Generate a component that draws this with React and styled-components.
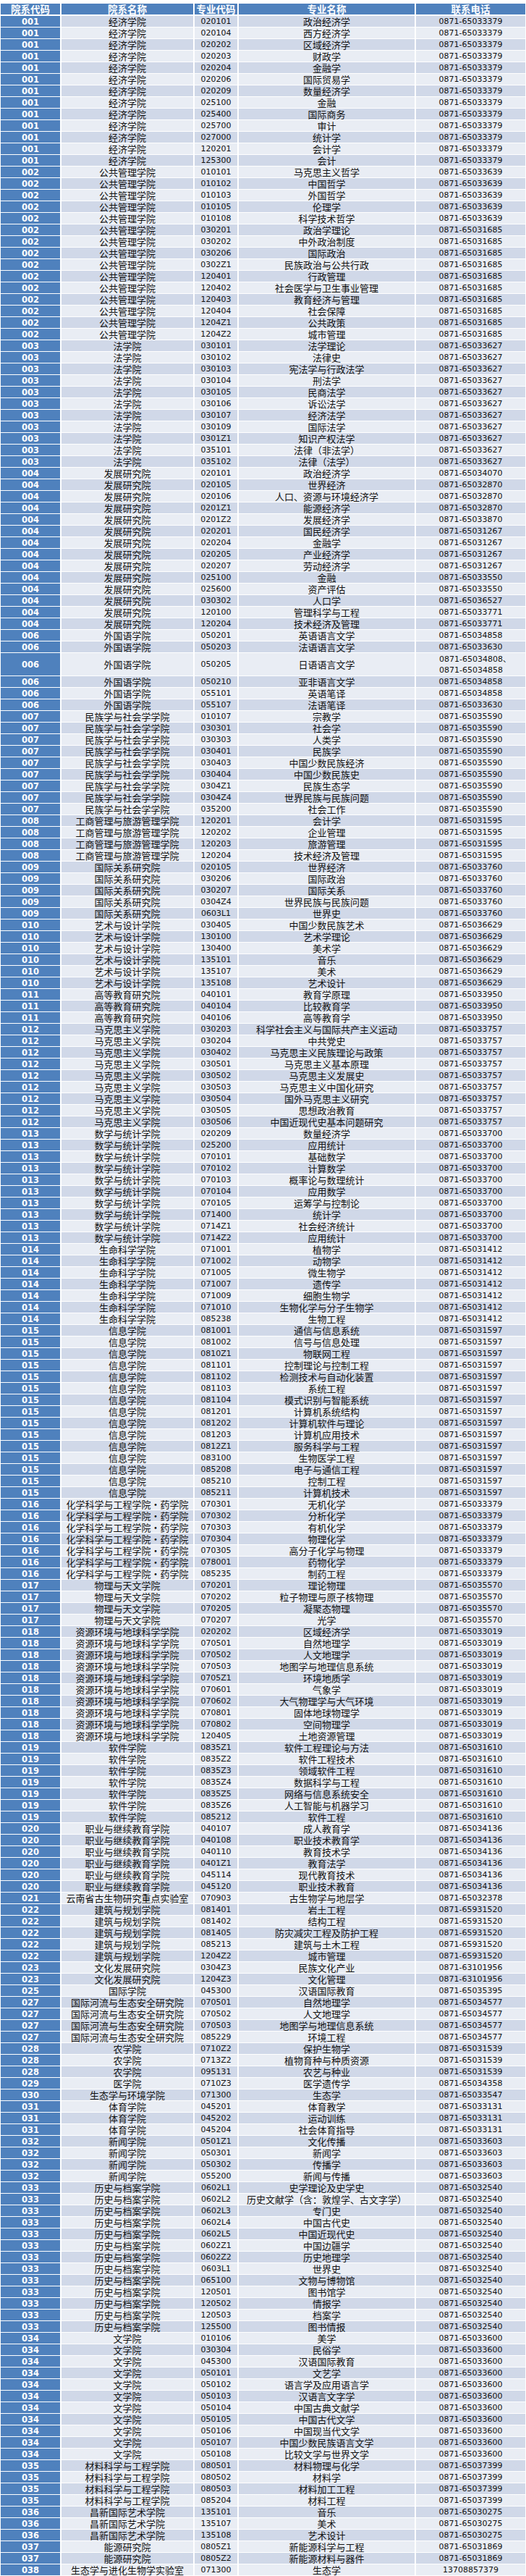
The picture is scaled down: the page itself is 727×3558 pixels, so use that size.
import React from "react";
import styled, { createGlobalStyle } from "styled-components";

const GlobalStyle = createGlobalStyle`
  body {
    margin: 0;
    background: #ffffff;
  }
`;

const BLUE = "#4f81bd";

const Sheet = styled.div`
  width: 727px;
  box-sizing: border-box;
  padding: 5px 1px 0 1px;
`;

const Row = styled.div`
  display: grid;
  grid-template-columns: 82px 182px 59px 243px 151px;
  column-gap: 2px;
  height: ${(p) => (p.$tall ? 31 : 15)}px;
  margin-bottom: ${(p) => (p.$head ? 2 : 1)}px;
`;

const HeadCell = styled.div`
  background: ${BLUE};
  color: #ffffff;
  font-family: "Noto Sans CJK SC", sans-serif;
  font-weight: 700;
  font-size: 13.5px;
  line-height: 15px;
  display: flex;
  align-items: center;
  justify-content: center;
  white-space: nowrap;
`;

const CodeCell = styled.div`
  background: ${BLUE};
  color: #ffffff;
  font-family: "DejaVu Sans", "Noto Sans CJK SC", sans-serif;
  font-weight: 700;
  font-size: 11.5px;
  display: flex;
  align-items: center;
  justify-content: center;
`;

const Cell = styled.div`
  background: ${(p) => (p.$dark ? "#d0d8e8" : "#e9edf4")};
  color: #111111;
  font-family: ${(p) =>
    p.$cjk
      ? `"Noto Sans CJK SC", sans-serif`
      : `"DejaVu Sans", "Noto Sans CJK SC", sans-serif`};
  font-size: ${(p) => (p.$cjk ? 13 : 11)}px;
  line-height: 15px;
  display: flex;
  align-items: center;
  justify-content: center;
  white-space: nowrap;
`;

const PhoneStack = styled.div`
  display: flex;
  flex-direction: column;
  align-items: flex-start;
  line-height: 15px;
  padding-left: 12px;
`;

const data = [
  ["001", "经济学院", "0871-65033379", [
    ["020101", "政治经济学"], ["020104", "西方经济学"], ["020202", "区域经济学"], ["020203", "财政学"],
    ["020204", "金融学"], ["020206", "国际贸易学"], ["020209", "数量经济学"], ["025100", "金融"],
    ["025400", "国际商务"], ["025700", "审计"], ["027000", "统计学"], ["120201", "会计学"], ["125300", "会计"]]],
  ["002", "公共管理学院", "0871-65031685", [
    ["010101", "马克思主义哲学", "0871-65033639"], ["010102", "中国哲学", "0871-65033639"],
    ["010103", "外国哲学", "0871-65033639"], ["010105", "伦理学", "0871-65033639"],
    ["010108", "科学技术哲学", "0871-65033639"], ["030201", "政治学理论"], ["030202", "中外政治制度"],
    ["030206", "国际政治"], ["0302Z1", "民族政治与公共行政"], ["120401", "行政管理"],
    ["120402", "社会医学与卫生事业管理"], ["120403", "教育经济与管理"], ["120404", "社会保障"],
    ["1204Z1", "公共政策"], ["1204Z2", "城市管理"]]],
  ["003", "法学院", "0871-65033627", [
    ["030101", "法学理论"], ["030102", "法律史"], ["030103", "宪法学与行政法学"], ["030104", "刑法学"],
    ["030105", "民商法学"], ["030106", "诉讼法学"], ["030107", "经济法学"], ["030109", "国际法学"],
    ["0301Z1", "知识产权法学"], ["035101", "法律（非法学）"], ["035102", "法律（法学）"]]],
  ["004", "发展研究院", "0871-65031267", [
    ["020101", "政治经济学", "0871-65034070"], ["020105", "世界经济", "0871-65032870"],
    ["020106", "人口、资源与环境经济学", "0871-65032870"], ["0201Z1", "能源经济学", "0871-65032870"],
    ["0201Z2", "发展经济学", "0871-65033870"], ["020201", "国民经济学"], ["020204", "金融学"],
    ["020205", "产业经济学"], ["020207", "劳动经济学"], ["025100", "金融", "0871-65033550"],
    ["025600", "资产评估", "0871-65033550"], ["030302", "人口学", "0871-65036527"],
    ["120100", "管理科学与工程", "0871-65033771"], ["120204", "技术经济及管理", "0871-65033771"]]],
  ["006", "外国语学院", "0871-65034858", [
    ["050201", "英语语言文学"], ["050203", "法语语言文学", "0871-65033630"],
    ["050205", "日语语言文学", ["0871-65034808、", "0871-65034858"]], ["050210", "亚非语言文学"],
    ["055101", "英语笔译"], ["055107", "法语笔译", "0871-65033630"]]],
  ["007", "民族学与社会学学院", "0871-65035590", [
    ["010107", "宗教学"], ["030301", "社会学"], ["030303", "人类学"], ["030401", "民族学"],
    ["030403", "中国少数民族经济"], ["030404", "中国少数民族史"], ["0304Z1", "民族生态学"],
    ["0304Z4", "世界民族与民族问题"], ["035200", "社会工作"]]],
  ["008", "工商管理与旅游管理学院", "0871-65031595", [
    ["120201", "会计学"], ["120202", "企业管理"], ["120203", "旅游管理"], ["120204", "技术经济及管理"]]],
  ["009", "国际关系研究院", "0871-65033760", [
    ["020105", "世界经济"], ["030206", "国际政治"], ["030207", "国际关系"],
    ["0304Z4", "世界民族与民族问题"], ["0603L1", "世界史"]]],
  ["010", "艺术与设计学院", "0871-65036629", [
    ["030405", "中国少数民族艺术"], ["130100", "艺术学理论"], ["130400", "美术学"],
    ["135101", "音乐"], ["135107", "美术"], ["135108", "艺术设计"]]],
  ["011", "高等教育研究院", "0871-65033950", [
    ["040101", "教育学原理"], ["040104", "比较教育学"], ["040106", "高等教育学"]]],
  ["012", "马克思主义学院", "0871-65033757", [
    ["030203", "科学社会主义与国际共产主义运动"], ["030204", "中共党史"],
    ["030402", "马克思主义民族理论与政策"], ["030501", "马克思主义基本原理"],
    ["030502", "马克思主义发展史"], ["030503", "马克思主义中国化研究"],
    ["030504", "国外马克思主义研究"], ["030505", "思想政治教育"], ["030506", "中国近现代史基本问题研究"]]],
  ["013", "数学与统计学院", "0871-65033700", [
    ["020209", "数量经济学"], ["025200", "应用统计"], ["070101", "基础数学"], ["070102", "计算数学"],
    ["070103", "概率论与数理统计"], ["070104", "应用数学"], ["070105", "运筹学与控制论"],
    ["071400", "统计学"], ["0714Z1", "社会经济统计"], ["0714Z2", "应用统计"]]],
  ["014", "生命科学学院", "0871-65031412", [
    ["071001", "植物学"], ["071002", "动物学"], ["071005", "微生物学"], ["071007", "遗传学"],
    ["071009", "细胞生物学"], ["071010", "生物化学与分子生物学"], ["085238", "生物工程"]]],
  ["015", "信息学院", "0871-65031597", [
    ["081001", "通信与信息系统"], ["081002", "信号与信息处理"], ["0810Z1", "物联网工程"],
    ["081101", "控制理论与控制工程"], ["081102", "检测技术与自动化装置"], ["081103", "系统工程"],
    ["081104", "模式识别与智能系统"], ["081201", "计算机系统结构"], ["081202", "计算机软件与理论"],
    ["081203", "计算机应用技术"], ["0812Z1", "服务科学与工程"], ["083100", "生物医学工程"],
    ["085208", "电子与通信工程"], ["085210", "控制工程"], ["085211", "计算机技术"]]],
  ["016", "化学科学与工程学院·药学院", "0871-65033379", [
    ["070301", "无机化学"], ["070302", "分析化学"], ["070303", "有机化学"], ["070304", "物理化学"],
    ["070305", "高分子化学与物理"], ["078001", "药物化学"], ["085235", "制药工程"]]],
  ["017", "物理与天文学院", "0871-65035570", [
    ["070201", "理论物理"], ["070202", "粒子物理与原子核物理"], ["070205", "凝聚态物理"], ["070207", "光学"]]],
  ["018", "资源环境与地球科学学院", "0871-65033019", [
    ["020202", "区域经济学"], ["070501", "自然地理学"], ["070502", "人文地理学"],
    ["070503", "地图学与地理信息系统"], ["0705Z1", "环境地质学"], ["070601", "气象学"],
    ["070602", "大气物理学与大气环境"], ["070801", "固体地球物理学"], ["070802", "空间物理学"],
    ["120405", "土地资源管理"]]],
  ["019", "软件学院", "0871-65031610", [
    ["0835Z1", "软件工程理论与方法"], ["0835Z2", "软件工程技术"], ["0835Z3", "领域软件工程"],
    ["0835Z4", "数据科学与工程"], ["0835Z5", "网络与信息系统安全"], ["0835Z6", "人工智能与机器学习"],
    ["085212", "软件工程"]]],
  ["020", "职业与继续教育学院", "0871-65034136", [
    ["040107", "成人教育学"], ["040108", "职业技术教育学"], ["040110", "教育技术学"],
    ["0401Z1", "教育法学"], ["045114", "现代教育技术"], ["045120", "职业技术教育"]]],
  ["021", "云南省古生物研究重点实验室", "0871-65032378", [["070903", "古生物学与地层学"]]],
  ["022", "建筑与规划学院", "0871-65931520", [
    ["081401", "岩土工程"], ["081402", "结构工程"], ["081405", "防灾减灾工程及防护工程"],
    ["085213", "建筑与土木工程"], ["1204Z2", "城市管理"]]],
  ["023", "文化发展研究院", "0871-63101956", [["0304Z3", "民族文化产业"], ["1204Z3", "文化管理"]]],
  ["025", "国际学院", "0871-65035395", [["045300", "汉语国际教育"]]],
  ["027", "国际河流与生态安全研究院", "0871-65034577", [
    ["070501", "自然地理学"], ["070502", "人文地理学"], ["070503", "地图学与地理信息系统"], ["085229", "环境工程"]]],
  ["028", "农学院", "0871-65031539", [
    ["0710Z2", "保护生物学"], ["0713Z2", "植物育种与种质资源"], ["095131", "农艺与种业"]]],
  ["029", "医学院", "0871-65034358", [["0710Z3", "医学遗传学"]]],
  ["030", "生态学与环境学院", "0871-65033547", [["071300", "生态学"]]],
  ["031", "体育学院", "0871-65033131", [
    ["045201", "体育教学"], ["045202", "运动训练"], ["045204", "社会体育指导"]]],
  ["032", "新闻学院", "0871-65033603", [
    ["0501Z1", "文化传播"], ["050301", "新闻学"], ["050302", "传播学"], ["055200", "新闻与传播"]]],
  ["033", "历史与档案学院", "0871-65032540", [
    ["0602L1", "史学理论及史学史"], ["0602L2", "历史文献学（含：敦煌学、古文字学）"], ["0602L3", "专门史"],
    ["0602L4", "中国古代史"], ["0602L5", "中国近现代史"], ["0602Z1", "中国边疆学"], ["0602Z2", "历史地理学"],
    ["0603L1", "世界史"], ["065100", "文物与博物馆"], ["120501", "图书馆学"], ["120502", "情报学"],
    ["120503", "档案学"], ["125500", "图书情报"]]],
  ["034", "文学院", "0871-65033600", [
    ["010106", "美学"], ["030304", "民俗学"], ["045300", "汉语国际教育"], ["050101", "文艺学"],
    ["050102", "语言学及应用语言学"], ["050103", "汉语言文字学"], ["050104", "中国古典文献学"],
    ["050105", "中国古代文学"], ["050106", "中国现当代文学"], ["050107", "中国少数民族语言文学"],
    ["050108", "比较文学与世界文学"]]],
  ["035", "材料科学与工程学院", "0871-65037399", [
    ["080501", "材料物理与化学"], ["080502", "材料学"], ["080503", "材料加工工程"], ["085204", "材料工程"]]],
  ["036", "昌新国际艺术学院", "0871-65030275", [["135101", "音乐"], ["135107", "美术"], ["135108", "艺术设计"]]],
  ["037", "能源研究院", "0871-65031869", [["0805Z1", "新能源科学与工程"], ["0805Z2", "新能源材料与器件"]]],
  ["038", "生态学与进化生物学实验室", "13708857379", [["071300", "生态学"]]],
];

const rows = data.flatMap(([dept, deptName, phone, majors]) =>
  majors.map(([code, name, own]) => ({ dept, deptName, code, name, phone: own || phone }))
);

const headers = ["院系代码", "院系名称", "专业代码", "专业名称", "联系电话"];

const App = () => (
  <Sheet>
    <GlobalStyle />
    <Row $head>
      {headers.map((h) => (
        <HeadCell key={h}>{h}</HeadCell>
      ))}
    </Row>
    {rows.map((r, i) => {
      const dark = i % 2 === 0;
      const tall = Array.isArray(r.phone);
      return (
        <Row key={`${r.dept}-${r.code}-${i}`} $tall={tall}>
          <CodeCell>{r.dept}</CodeCell>
          <Cell $dark={dark} $cjk>{r.deptName}</Cell>
          <Cell $dark={dark}>{r.code}</Cell>
          <Cell $dark={dark} $cjk>{r.name}</Cell>
          <Cell $dark={dark}>
            {tall ? (
              <PhoneStack>
                {r.phone.map((p) => (
                  <span key={p}>{p}</span>
                ))}
              </PhoneStack>
            ) : (
              r.phone
            )}
          </Cell>
        </Row>
      );
    })}
  </Sheet>
);

export default App;
